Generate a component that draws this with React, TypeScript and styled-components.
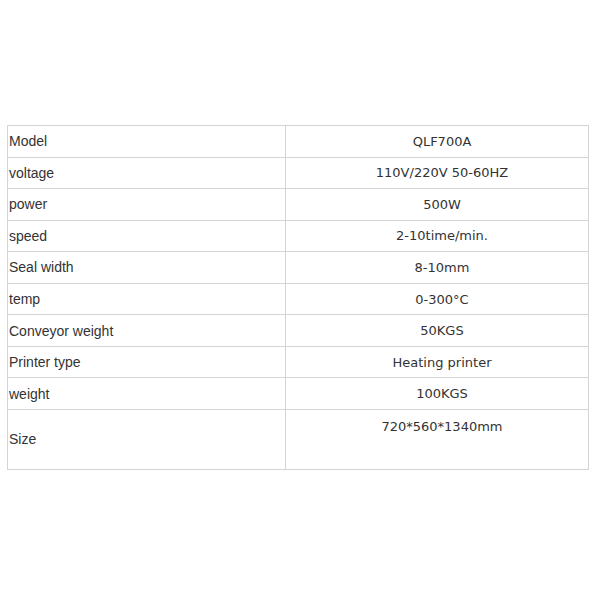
import React from "react";
import styled, { createGlobalStyle } from "styled-components";

const Global = createGlobalStyle`
  html, body { margin: 0; padding: 0; background: #ffffff; }
  body { font-family: "Liberation Sans", Arial, sans-serif; }
`;

const Page = styled.div`
  padding: 125px 0 0 7px;
`;

const Table = styled.table`
  border-collapse: collapse;
  width: 582px;
  table-layout: fixed;
`;

const Row = styled.tr<{ $tall?: boolean }>`
  height: ${(p) => (p.$tall ? "60px" : "31.55px")};
`;

const Label = styled.td`
  width: 278px;
  border: 1px solid #d4d4d4;
  padding: 0 0 0 1px;
  font-family: "Liberation Sans", Arial, sans-serif;
  font-size: 14px;
  color: #333333;
  vertical-align: middle;
  box-sizing: border-box;
`;

const Value = styled.td<{ $top?: boolean }>`
  border: 1px solid #d4d4d4;
  padding: ${(p) => (p.$top ? "9px" : "0")} 0 0 10px;
  font-family: "DejaVu Sans", Verdana, sans-serif;
  font-size: 13px;
  color: #333333;
  text-align: center;
  vertical-align: ${(p) => (p.$top ? "top" : "middle")};
  box-sizing: border-box;
`;

const rows: [string, string][] = [
  ["Model", "QLF700A"],
  ["voltage", "110V/220V 50-60HZ"],
  ["power", "500W"],
  ["speed", "2-10time/min."],
  ["Seal width", "8-10mm"],
  ["temp", "0-300°C"],
  ["Conveyor weight", "50KGS"],
  ["Printer type", "Heating printer"],
  ["weight", "100KGS"],
];

export default function App() {
  return (
    <>
      <Global />
      <Page>
        <Table>
          <tbody>
            {rows.map(([k, v]) => (
              <Row key={k}>
                <Label>{k}</Label>
                <Value>{v}</Value>
              </Row>
            ))}
            <Row $tall>
              <Label>Size</Label>
              <Value $top>720*560*1340mm</Value>
            </Row>
          </tbody>
        </Table>
      </Page>
    </>
  );
}
